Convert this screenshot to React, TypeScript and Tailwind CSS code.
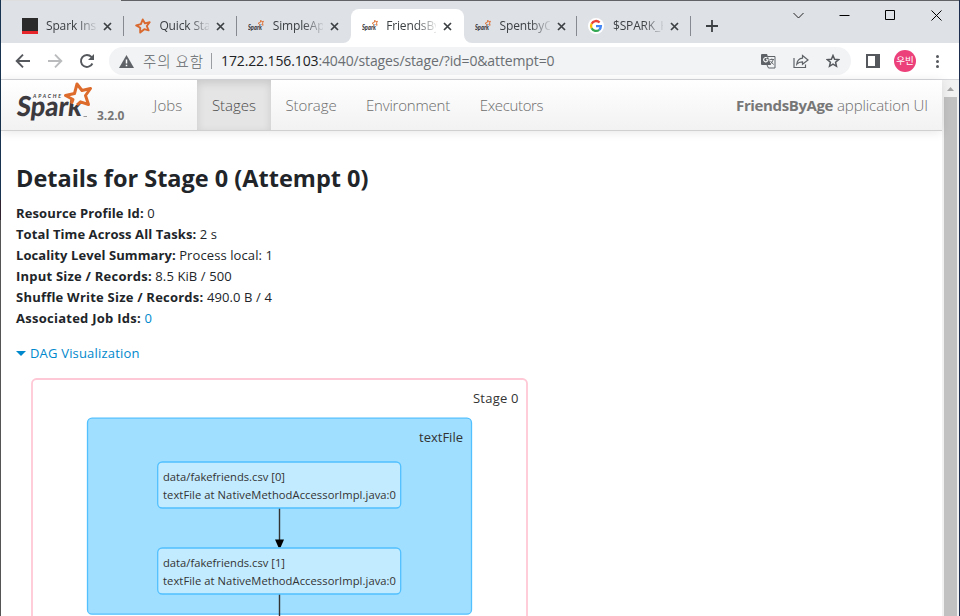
import React from "react";

function SparkLogo() {
  return (
    <svg viewBox="0 0 78 42" className="h-[42px] w-[78px] shrink-0">
      <text x="18" y="18" fontFamily="Lato, sans-serif" fontWeight="700" fontSize="5.2" fill="#3c3a3e" textLength="28" fontStyle="italic">APACHE</text>
      <g transform="translate(4.5 0) skewX(-7)">
        <text x="1" y="36.3" fontFamily="Lato, sans-serif" fontWeight="900" fontSize="27.5" fill="#3c3a3e" textLength="65" lengthAdjust="spacingAndGlyphs">Spark</text>
      </g>
      <path d="M56.5 23.5 L58 19.5 L50.5 15.5 L59.5 13.5 L62 4 L67 10.5 L75.5 8.5 L70.5 15.5 L73.5 24.5 L65.5 21.8 L62 25" fill="#fbfbfb" stroke="#dd6b2c" strokeWidth="3" strokeLinejoin="round" />
      <path d="M68.5 36.5H72" stroke="#999" strokeWidth="1" />
    </svg>
  );
}

function SparkIcon() {
  return (
    <svg viewBox="0 0 16 16" className="h-4 w-4 shrink-0">
      <text x="0" y="11.8" fontFamily="Lato, sans-serif" fontWeight="900" fontSize="7.5" fill="#3c3a3e" textLength="13.8" lengthAdjust="spacingAndGlyphs" fontStyle="italic">Spark</text>
      <path d="M11.3 6.5L10.3 5L12.2 4.5L12.8 2.2L13.8 3.8L15.5 3.3L14.5 5L15.1 7.3L13.4 6.5" fill="none" stroke="#dd6b2c" strokeWidth=".9" />
    </svg>
  );
}

function StarIcon() {
  return (
    <svg viewBox="0 0 16 16" className="h-4 w-4 shrink-0">
      <path d="M7.7 1.5 L10 5.4 L14.7 4.2 L11.8 8 L13.6 12.3 L9.3 11.2 L5.2 14.6 L5.2 9.8 L1.2 7.4 L5.9 6.1 Z" fill="none" stroke="#d9692f" strokeWidth="1.9" strokeLinejoin="round" />
    </svg>
  );
}

function GoogleIcon() {
  return (
    <svg viewBox="0 0 16 16" className="h-4 w-4 shrink-0">
      <circle cx="8" cy="8" r="8" fill="#fff" />
      <g fill="none" strokeWidth="2.3">
        <path d="M11.6 4.5 A5 5 0 0 0 3.6 5.7" stroke="#ea4335" />
        <path d="M3.6 5.7 A5 5 0 0 0 3.6 10.3" stroke="#fbbc05" />
        <path d="M3.6 10.3 A5 5 0 0 0 11.2 11.8" stroke="#34a853" />
        <path d="M8 8.1 H12.9 A5 5 0 0 1 11.2 11.8" stroke="#4285f4" />
      </g>
    </svg>
  );
}

function InstallIcon() {
  return (
    <div className="flex h-4 w-4 shrink-0 flex-col bg-[#2b2b2b]">
      <div className="mt-auto h-[3px] bg-[#e5252a]" />
    </div>
  );
}

type TabProps = { icon: React.ReactNode; label: string; active?: boolean; line?: boolean };

function Tab({ icon, label, active, line }: TabProps) {
  return (
    <div className={"relative flex h-[34px] w-[113.4px] shrink-0 items-center pl-[11px] " + (active ? "rounded-t-lg bg-white" : "")}>
      {active && (
        <>
          <svg className="absolute bottom-0 -left-2 h-2 w-2" viewBox="0 0 8 8"><path d="M8 0V8H0A8 8 0 0 0 8 0Z" fill="#fff" /></svg>
          <svg className="absolute -right-2 bottom-0 h-2 w-2" viewBox="0 0 8 8"><path d="M0 0V8H8A8 8 0 0 1 0 0Z" fill="#fff" /></svg>
        </>
      )}
      {icon}
      <div className="ml-[8.5px] w-[50px] overflow-hidden text-[12px] leading-4 tracking-[-0.15px] whitespace-nowrap text-[#3c4043] [mask-image:linear-gradient(to_right,black_60%,transparent_105%)]">{label}</div>
      <svg className="ml-[7px] h-[9px] w-[9px] shrink-0" viewBox="0 0 9 9"><path d="M1 1L8 8M8 1L1 8" stroke="#3c4043" strokeWidth="1.7" /></svg>
      {line && <div className="ml-auto h-5 w-px bg-[#868a90]" />}
    </div>
  );
}

function TabStrip() {
  return (
    <div className="flex h-[42px] shrink-0 items-start bg-[#dee1e6] pt-2 pl-[9.5px]">
      <Tab icon={<InstallIcon />} label="Spark Ins" line />
      <Tab icon={<StarIcon />} label="Quick Sta" line />
      <Tab icon={<SparkIcon />} label="SimpleAp" />
      <Tab icon={<SparkIcon />} label="FriendsBy" active />
      <Tab icon={<SparkIcon />} label="SpentbyC" line />
      <Tab icon={<GoogleIcon />} label="$SPARK_H" line />
      <svg className="mt-[11px] ml-[15.1px] h-3 w-3" viewBox="0 0 12 12"><path d="M6 0V12M0 6H12" stroke="#3c4043" strokeWidth="1.8" /></svg>
      <div className="ml-[75px] flex items-center pt-px">
        <svg className="h-[11px] w-[11px]" viewBox="0 0 11 11"><path d="M.5 3L5.5 8L10.5 3" fill="none" stroke="#222" /></svg>
        <svg className="ml-[35px] h-[11px] w-[11px]" viewBox="0 0 11 11"><path d="M0.5 5.5H10.5" stroke="#000" /></svg>
        <svg className="ml-[35px] h-[11px] w-[11px]" viewBox="0 0 11 11"><path d="M.5 .5H9.5V9.5H.5Z" fill="none" stroke="#000" /></svg>
        <svg className="ml-[35px] h-[11px] w-[11px]" viewBox="0 0 11 11"><path d="M.5 .5L10.5 10.5M10.5 .5L.5 10.5" stroke="#000" /></svg>
      </div>
    </div>
  );
}

function Toolbar() {
  return (
    <div className="flex h-9 shrink-0 items-center bg-white pl-[14px]">
      <svg className="h-4 w-4" viewBox="0 0 16 16"><path d="M8 1.7L1.7 8L8 14.3M1.7 8H15" fill="none" stroke="#55585d" strokeWidth="1.9" /></svg>
      <svg className="ml-4 h-4 w-4" viewBox="0 0 16 16"><path d="M8 1.7L14.3 8L8 14.3M14.3 8H1" fill="none" stroke="#b9bbbd" strokeWidth="1.9" /></svg>
      <svg className="ml-4 h-4 w-4" viewBox="0 0 16 16"><path d="M13.4 10.5A6 6 0 1 1 12.4 3.9L14 5.5" fill="none" stroke="#55585d" strokeWidth="1.9" /><path d="M15 1V7H9Z" fill="#55585d" /></svg>
      <div className="ml-[14px] flex h-7 w-[742px] items-center rounded-full bg-[#f1f3f4] pl-[10px]">
        <svg className="h-[13px] w-[15px]" viewBox="0 0 15 13"><path d="M7.5 0L15 13H0Z" fill="#5f6368" /><path d="M7.5 4.5V8.5M7.5 9.8V11.3" stroke="#fff" strokeWidth="1.5" /></svg>
        <div className="ml-[9px] w-[60px] font-['Noto_Sans_CJK_KR',sans-serif] text-[14.5px] leading-5 font-light tracking-[0.9px] whitespace-nowrap text-[#5f6368]">주의 요함</div>
        <div className="ml-[8px] h-4 w-px bg-[#9a9da1]" />
        <div className="ml-[9px] w-[336px] text-[14px] leading-5 tracking-[-0.12px] whitespace-nowrap text-[#6a6e73]"><span className="text-[#202124]">172.22.156.103</span>:4040/stages/stage/?id=0&amp;attempt=0</div>
        <svg className="ml-[204px] h-[15px] w-[15px]" viewBox="0 0 15 15">
          <path d="M0 1Q0 0 1 0H6L10 11H1Q0 11 0 10Z" fill="#5f6368" />
          <path d="M7 2.5H14V14H7.5L6 11" fill="none" stroke="#5f6368" />
          <path d="M6.3 4A2.2 2.2 0 1 0 7 6V5.7H5" fill="none" stroke="#fff" strokeWidth="1.1" />
          <path d="M8.5 5.5H13M10.8 4.5V5.5M12.3 5.5Q11.5 8.5 8.8 10.5M9.5 7Q11 9.5 12.8 10.5" fill="none" stroke="#5f6368" strokeWidth=".9" />
        </svg>
        <svg className="ml-[17px] h-[15px] w-4" viewBox="0 0 16 15"><path d="M1 4V13.5H12.5V10.5M9.5 1.5L15 6L9.5 10.3V7.8Q5.8 7.7 3.8 10.2Q4.5 4.7 9.5 4.2Z" fill="none" stroke="#5f6368" strokeWidth="1.2" /></svg>
        <svg className="ml-[17px] h-[14px] w-[14px]" viewBox="0 0 14 14"><path d="M7 1.5L8.6 5.2L12.7 5.6L9.6 8.3L10.5 12.3L7 10.2L3.5 12.3L4.4 8.3L1.3 5.6L5.4 5.2Z" fill="none" stroke="#55585d" strokeWidth="1.5" /></svg>
      </div>
      <div className="ml-[15px] h-[14px] w-[14px] border-2 border-r-[5px] border-[#55585d]" />
      <div className="ml-[14px] flex h-[22px] w-[22px] items-center justify-center rounded-full bg-[#ec407a] font-['Noto_Sans_CJK_KR',sans-serif] text-[9.5px] leading-none whitespace-nowrap text-white">우빈</div>
      <div className="ml-[20px] flex w-[3px] flex-col gap-[2px]">
        <div className="h-[3px] rounded-full bg-[#55585d]" />
        <div className="h-[3px] rounded-full bg-[#55585d]" />
        <div className="h-[3px] rounded-full bg-[#55585d]" />
      </div>
    </div>
  );
}

function NavBar() {
  return (
    <div className="z-10 flex h-[51px] shrink-0 border-b border-[#d0d0d0] bg-linear-to-b from-white to-[#f2f2f2] pl-[14px] text-[15px] leading-[50px] font-light text-[#6c6c6c] shadow-[0_1px_10px_rgba(0,0,0,0.1)]">
      <SparkLogo />
      <div className="ml-[4px] w-[42px] pt-[11px] text-[12px] font-bold whitespace-nowrap text-[#777]">3.2.0</div>
      <div className="w-[58px] text-center tracking-[0.1px]">Jobs</div>
      <div className="w-[74px] bg-[#e5e5e5] text-center text-[#4a4a4a] shadow-[inset_0_3px_8px_rgba(0,0,0,0.125)]">Stages</div>
      <div className="w-[80px] text-center tracking-[-0.1px]">Storage</div>
      <div className="w-[114px] text-center tracking-[-0.2px]">Environment</div>
      <div className="w-[93px] text-center tracking-[-0.35px]">Executors</div>
      <div className="mr-[14px] ml-auto tracking-[-0.08px] whitespace-nowrap"><b className="font-bold tracking-[-0.38px] text-[#777]">FriendsByAge</b> application UI</div>
    </div>
  );
}

function Info({ name, value, link, track }: { name: string; value: string; link?: boolean; track: string }) {
  return (
    <li className="tracking-[0.1px] whitespace-nowrap">
      <strong className={"font-bold " + track}>{name}:</strong> <span className={link ? "text-[#0088cc]" : ""}>{value}</span>
    </li>
  );
}

function DagNode({ y, index }: { y: number; index: number }) {
  return (
    <g>
      <rect x="127.7" y={y} width="243" height="46" rx="4.5" fill="#c3ebff" stroke="#52c0ff" strokeWidth="1.3" />
      <text x="133" y={y + 19} fontSize="11.2" textLength="122">data/fakefriends.csv [{index}]</text>
      <text x="133" y={y + 37} fontSize="11.2" textLength="233">textFile at NativeMethodAccessorImpl.java:0</text>
    </g>
  );
}

function Dag() {
  return (
    <svg className="mt-[11px] ml-[14px] block h-[242px] w-[500px] shrink-0" viewBox="0 0 500 242" fill="#333">
      <rect x="2" y="4" width="495" height="300" rx="4.5" fill="#fff" stroke="#ffc8d6" strokeWidth="1.8" />
      <text x="443" y="28" fontSize="13" textLength="45.5">Stage 0</text>
      <rect x="57.5" y="43.2" width="384" height="196" rx="4.5" fill="#a0dfff" stroke="#52c0ff" strokeWidth="1.3" />
      <text x="389" y="67" fontSize="13" textLength="44">textFile</text>
      <path d="M249.5 133V165M249.5 219V260" stroke="#333" strokeWidth="1.4" />
      <path d="M245 164.5H254L250.5 172.5H248.5Z" fill="#000" />
      <DagNode y={87} index={0} />
      <DagNode y={173} index={1} />
    </svg>
  );
}

function Content() {
  return (
    <main className="flex min-h-0 flex-1 flex-col overflow-hidden bg-white pl-[15px] text-[13px] text-[#212529]">
      <h3 className="mt-[31px] text-[23.5px] leading-8 font-bold whitespace-nowrap">Details for Stage 0 (Attempt 0)</h3>
      <ul className="mt-[9px] leading-[21px]">
        <Info name="Resource Profile Id" value="0" track="tracking-[0.12px]" />
        <Info name="Total Time Across All Tasks" value="2 s" track="tracking-[0.08px]" />
        <Info name="Locality Level Summary" value="Process local: 1" track="tracking-[0.08px]" />
        <Info name="Input Size / Records" value="8.5 KiB / 500" track="tracking-[0.22px]" />
        <Info name="Shuffle Write Size / Records" value="490.0 B / 4" track="tracking-[0.22px]" />
        <Info name="Associated Job Ids" value="0" link track="tracking-[0.26px]" />
      </ul>
      <div className="mt-[14px] flex items-center leading-[21px] text-[#0088cc]">
        <svg className="h-[5px] w-[10px]" viewBox="0 0 10 5"><path d="M0 0H10L5 5Z" fill="#0088cc" /></svg>
        <span className="ml-1 tracking-[0.18px]">DAG Visualization</span>
      </div>
      <Dag />
    </main>
  );
}

function ScrollBar() {
  return (
    <div className="flex w-[17px] shrink-0 flex-col items-center bg-[#f1f1f1]">
      <svg className="mt-[7px] h-1 w-[7px]" viewBox="0 0 7 4"><path d="M0 4L3.5 0L7 4Z" fill="#a3a3a3" /></svg>
      <div className="mt-[6px] w-[13px] flex-1 bg-[#c1c1c1]" />
    </div>
  );
}

export default function App() {
  return (
    <div className="flex h-[616px] w-[960px] overflow-hidden bg-white font-['Open_Sans','Noto_Sans_CJK_KR',sans-serif]">
      <div className="flex w-px shrink-0 flex-col">
        <div className="h-[200px] bg-[#17334f]" />
        <div className="h-[20px] bg-[#30222f]" />
        <div className="flex-1 bg-[#555]" />
      </div>
      <div className="flex w-[958px] flex-col">
        <div className="flex h-px shrink-0">
          <div className="w-[120px] bg-[#dedede]" />
          <div className="flex-1 bg-[#606265]" />
        </div>
        <TabStrip />
        <Toolbar />
        <div className="h-px shrink-0 bg-[#d5d7da]" />
        <div className="flex min-h-0 flex-1">
          <div className="flex min-w-0 flex-1 flex-col">
            <NavBar />
            <Content />
          </div>
          <ScrollBar />
        </div>
      </div>
      <div className="w-px bg-[#1c2d4d]" />
    </div>
  );
}
